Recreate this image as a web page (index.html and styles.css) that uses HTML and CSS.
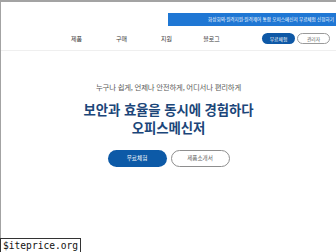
FILE: index.html
```html
<!DOCTYPE html>
<html lang="ko">

<head>
    <meta charset="UTF-8">
    <meta name="viewport" content="width=device-width, initial-scale=1.0">
    <title>오피스메신저</title>
    <link rel="stylesheet" href="styles.css">
</head>

<body>
    <div class="page">
        <div class="notice-row">
            <div class="notice">화상회의·원격지원·원격제어 통합 오피스메신저 무료체험 신청하기</div>
        </div>

        <header class="gnb">
            <nav class="menu">
                <a href="#">제품</a>
                <a href="#">구매</a>
                <a href="#">지원</a>
                <a href="#">블로그</a>
            </nav>
            <div class="gnb-buttons">
                <a href="#" class="btn-small filled">무료체험</a>
                <a href="#" class="btn-small outline">관리자</a>
            </div>
        </header>

        <section class="hero">
            <p class="sub">누구나 쉽게, 언제나 안전하게, 어디서나 편리하게</p>
            <h1>보안과 효율을 동시에 경험하다<br>오피스메신저</h1>
            <div class="hero-buttons">
                <a href="#" class="btn filled">무료체험</a>
                <a href="#" class="btn outline">제품소개서</a>
            </div>
        </section>
    </div>

    <div class="watermark">$iteprice.org</div>
</body>

</html>
```

FILE: styles.css
```css
html,
body {
    margin: 0;
    padding: 0;
}

body {
    font-family: "Noto Sans CJK KR", "Noto Sans", sans-serif;
    background-color: #ffffff;
    height: 252px;
    overflow: hidden;
    box-sizing: border-box;
    border-top: 2px solid #a3a3a3;
    border-left: 1px solid #a3a3a3;
}

a {
    text-decoration: none;
}

.notice-row {
    display: flex;
    justify-content: flex-end;
    padding-top: 11px;
}

.notice {
    width: 168px;
    height: 13px;
    background-color: #1f77d4;
    color: #ffffff;
    font-size: 4.6px;
    line-height: 13px;
    text-align: right;
    padding-right: 2px;
    box-sizing: border-box;
    white-space: nowrap;
    overflow: hidden;
}

.gnb {
    display: flex;
    align-items: center;
    height: 24px;
    border-bottom: 1px solid #efefef;
    padding-right: 6px;
}

.menu {
    display: flex;
    margin-left: 53px;
}

.menu a {
    width: 45px;
    text-align: center;
    font-size: 6px;
    color: #3a3a3a;
}

.gnb-buttons {
    display: flex;
    gap: 2px;
    margin-left: auto;
}

.btn-small {
    width: 33px;
    height: 11px;
    line-height: 11px;
    border-radius: 6px;
    font-size: 4.8px;
    text-align: center;
    box-sizing: border-box;
}

.btn-small.filled {
    background-color: #0e58a6;
    color: #ffffff;
}

.btn-small.outline {
    border: 1px solid #9a9a9a;
    line-height: 9px;
    color: #555555;
}

.hero {
    text-align: center;
    padding-top: 31px;
}

.sub {
    margin: 0;
    font-size: 7.4px;
    line-height: 10px;
    color: #5a5a5a;
    letter-spacing: -0.2px;
}

.hero h1 {
    margin: 7.5px 0 0;
    font-size: 13.4px;
    line-height: 18px;
    font-weight: 700;
    color: #1b4679;
    letter-spacing: -0.1px;
}

.hero-buttons {
    display: flex;
    justify-content: center;
    gap: 4px;
    margin-top: 14px;
}

.btn {
    width: 59px;
    height: 17px;
    line-height: 17px;
    border-radius: 9px;
    font-size: 5.6px;
    box-sizing: border-box;
}

.btn.filled {
    background-color: #0d5aa7;
    color: #ffffff;
}

.btn.outline {
    border: 1px solid #8e8e8e;
    line-height: 15px;
    color: #666666;
}

.watermark {
    position: absolute;
    left: 0;
    top: 238px;
    height: 16px;
    padding: 0 2px;
    background-color: #ffffff;
    border: 1px solid #333333;
    font-family: "DejaVu Sans Mono", monospace;
    font-size: 9.6px;
    line-height: 14px;
    color: #111111;
}
```
